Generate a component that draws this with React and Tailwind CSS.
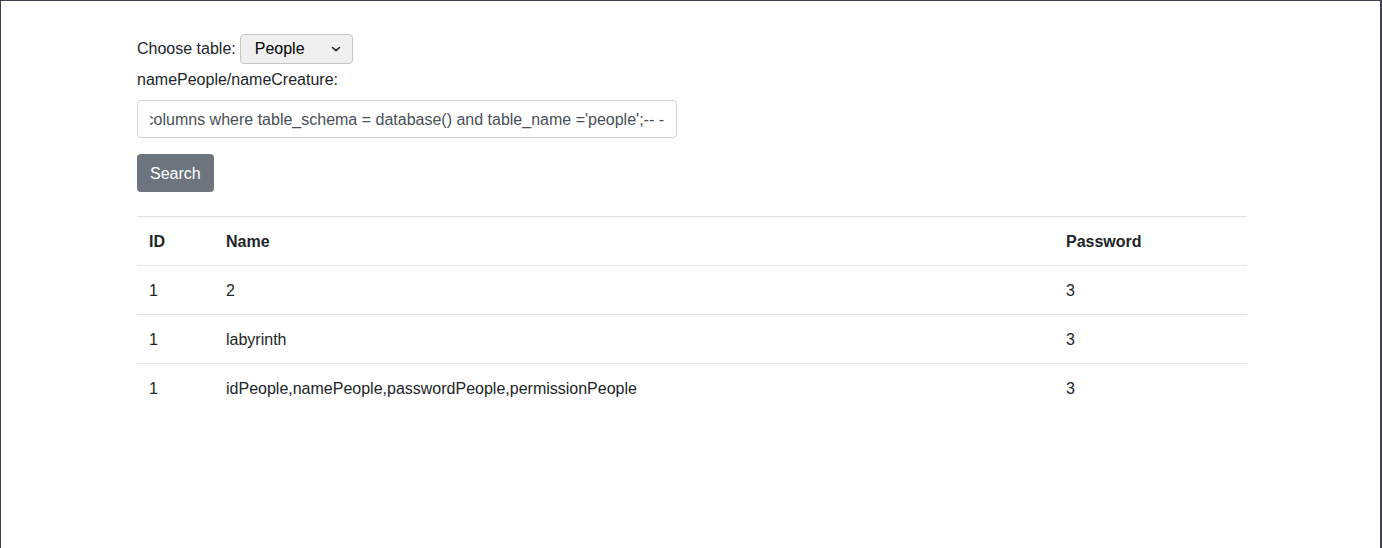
import React from 'react'

const rows = [
  { id: 1, name: '2', password: 3 },
  { id: 1, name: 'labyrinth', password: 3 },
  { id: 1, name: 'idPeople,namePeople,passwordPeople,permissionPeople', password: 3 },
]

const query =
  "1' union select 1, group_concat(column_name), 3 from information_schema.columns where table_schema = database() and table_name ='people';-- -"

export default function App() {
  return (
    <div
      className="min-h-[548px] bg-white border-l border-r-2 border-t border-[#3d4350] text-[#212529] text-[16px]"
      style={{ fontFamily: '"Liberation Sans", Arial, sans-serif' }}
    >
      <div className="w-[1110px] ml-[136px] pt-[33px]">
        {/* table picker */}
        <div className="flex items-center h-[30px]">
          <span className="leading-6">Choose table:</span>
          <div className="ml-[4px] w-[113px] h-[30px] flex items-center justify-between pl-[14px] pr-[10px] rounded-[4px] border border-[#c4c4c4] bg-[#efefef] text-black">
            <span>People</span>
            <svg className="w-[12px] h-[12px]" viewBox="0 0 12 12" fill="none" stroke="#222" strokeWidth="1.6" strokeLinecap="round" strokeLinejoin="round">
              <path d="M2.5 4.5l3.5 3.2 3.5-3.2" />
            </svg>
          </div>
        </div>

        <div className="mt-[4px] leading-6">namePeople/nameCreature:</div>

        {/* search field, scrolled to the end of its value */}
        <div className="mt-[8px] w-[540px] h-[38px] rounded-[4px] border border-[#ced4da] flex items-center px-[12px] pt-[2px] text-[#495057]">
          <div className="flex-1 flex justify-end overflow-hidden whitespace-nowrap">
            <span>{query}</span>
          </div>
        </div>

        <button className="mt-[16px] h-[38px] px-[13px] pt-[2px] rounded-[4px] bg-[#6c757d] text-white leading-6">
          Search
        </button>

        {/* results */}
        <table className="mt-[24px] w-[1110px] border-collapse text-left">
          <thead>
            <tr className="border-t border-b border-[#dee2e6]">
              <th className="w-[77px] px-[12px] pt-[13px] pb-[11px] font-bold leading-6">ID</th>
              <th className="w-[840px] px-[12px] pt-[13px] pb-[11px] font-bold leading-6">Name</th>
              <th className="px-[12px] pt-[13px] pb-[11px] font-bold leading-6">Password</th>
            </tr>
          </thead>
          <tbody>
            {rows.map((r, i) => (
              <tr key={i} className={i < rows.length - 1 ? 'border-b border-[#dee2e6]' : ''}>
                <td className="px-[12px] pt-[13px] pb-[11px] leading-6">{r.id}</td>
                <td className="px-[12px] pt-[13px] pb-[11px] leading-6">{r.name}</td>
                <td className="px-[12px] pt-[13px] pb-[11px] leading-6">{r.password}</td>
              </tr>
            ))}
          </tbody>
        </table>
      </div>
    </div>
  )
}
